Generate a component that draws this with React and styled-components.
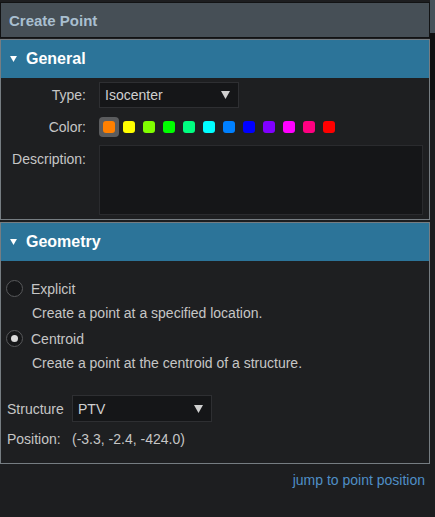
import React from 'react';
import styled, { createGlobalStyle } from 'styled-components';

const GlobalStyle = createGlobalStyle`
	html, body {
		margin: 0;
		padding: 0;
		background: #1d1e20;
	}
	body {
		font-family: 'Liberation Sans', Arial, sans-serif;
		font-size: 14px;
		color: #c6c6c6;
	}
`;

const swatches = [
	'#ff8000',
	'#ffff00',
	'#80ff00',
	'#00ff00',
	'#00ff80',
	'#00ffff',
	'#0080ff',
	'#0000ff',
	'#8000ff',
	'#ff00ff',
	'#ff0080',
	'#ff0000',
];

const Page = styled.div`
	display: flex;
	height: 517px;
	width: 435px;
	background: #1d1e20;
	overflow: hidden;
`;

const Main = styled.div`
	display: flex;
	flex-direction: column;
	width: 430px;
	padding-top: 2px;
	box-sizing: border-box;
	background: #1d1e20;
`;

const ScrollTrack = styled.div`
	width: 5px;
	background: linear-gradient(
		to bottom,
		#46525a 0,
		#46525a 33px,
		#0f1011 33px,
		#0f1011 100px,
		#1b1c1e 100px
	);
`;

const TitleBar = styled.div`
	height: 36px;
	box-sizing: border-box;
	background: #464f56;
	border: 1px solid #121314;
	color: #a9bfd0;
	font-weight: bold;
	font-size: 15px;
	display: flex;
	align-items: center;
	padding-left: 8px;
`;

const Panel = styled.div`
	border: 1px solid #767d82;
	margin-top: ${(props) => props.gap}px;
	background: #1e1f21;
`;

const PanelHeader = styled.div`
	height: 38px;
	background: #2c7499;
	color: #ffffff;
	font-weight: bold;
	font-size: 16px;
	display: flex;
	align-items: center;
	gap: 9px;
	padding-left: 9px;
`;

const FormGrid = styled.div`
	display: grid;
	grid-template-columns: 85px 1fr;
	column-gap: 13px;
	row-gap: 9px;
	padding: 4px 6px 4px 0;
	align-items: center;
`;

const Label = styled.div`
	text-align: right;
	line-height: 16px;
	align-self: ${(props) => (props.top ? 'start' : 'center')};
	padding-top: ${(props) => (props.top ? '5px' : '0')};
`;

const Select = styled.div`
	width: ${(props) => props.width}px;
	height: ${(props) => props.height}px;
	box-sizing: border-box;
	background: #151618;
	border: 1px solid #2e2f32;
	display: flex;
	align-items: center;
	justify-content: space-between;
	padding: 0 8px 0 5px;
	color: #d0d0d0;
`;

const Swatches = styled.div`
	display: flex;
`;

const Swatch = styled.div`
	width: 20px;
	height: 20px;
	border-radius: 4px;
	display: flex;
	align-items: center;
	justify-content: center;
	background: ${(props) => (props.selected ? '#5b5c5e' : 'transparent')};

	&::after {
		content: '';
		width: 12px;
		height: 12px;
		border-radius: 3px;
		background: ${(props) => props.color};
	}
`;

const TextArea = styled.div`
	height: 70px;
	box-sizing: border-box;
	background: #151618;
	border: 1px solid #2a2b2e;
	margin-top: -1px;
`;

const GeometryBody = styled.div`
	padding: 15px 0 13px 5px;
	display: flex;
	flex-direction: column;
`;

const RadioRow = styled.div`
	display: flex;
	align-items: center;
	gap: 8px;
	height: 25px;
`;

const Radio = styled.div`
	width: 17px;
	height: 17px;
	box-sizing: border-box;
	border-radius: 50%;
	border: 1px solid #58595b;
	background: #161719;
	display: flex;
	align-items: center;
	justify-content: center;

	&::after {
		content: '';
		width: 7px;
		height: 7px;
		border-radius: 50%;
		background: ${(props) => (props.checked ? '#dadada' : 'transparent')};
	}
`;

const Hint = styled.div`
	height: 25px;
	line-height: 25px;
	padding-left: 26px;
`;

const FieldGrid = styled.div`
	display: grid;
	grid-template-columns: 56px auto;
	column-gap: 9px;
	row-gap: 6px;
	align-items: center;
	justify-content: start;
	margin-top: 19px;
	margin-left: 1px;
`;

const Value = styled.div`
	line-height: 22px;
`;

const Link = styled.div`
	margin-top: 8px;
	line-height: 16px;
	text-align: right;
	padding-right: 5px;
	color: #4f8fc6;
`;

const Caret = ({ size = 7, color = '#ffffff' }) => (
	<svg width={size} height={size - 1} viewBox="0 0 8 7">
		<polygon points="0,0 8,0 4,7" fill={color} />
	</svg>
);

const App = () => (
	<Page>
		<GlobalStyle />
		<Main>
			<TitleBar>Create Point</TitleBar>

			<Panel gap={1}>
				<PanelHeader>
					<Caret />
					General
				</PanelHeader>
				<FormGrid>
					<Label>Type:</Label>
					<Select width={140} height={26}>
						Isocenter
						<Caret size={9} color="#cfcfcf" />
					</Select>
					<Label>Color:</Label>
					<Swatches>
						{swatches.map((c, i) => (
							<Swatch key={c} color={c} selected={i === 0} />
						))}
					</Swatches>
					<Label top>Description:</Label>
					<TextArea />
				</FormGrid>
			</Panel>

			<Panel gap={2}>
				<PanelHeader>
					<Caret />
					Geometry
				</PanelHeader>
				<GeometryBody>
					<RadioRow>
						<Radio />
						Explicit
					</RadioRow>
					<Hint>Create a point at a specified location.</Hint>
					<RadioRow>
						<Radio checked />
						Centroid
					</RadioRow>
					<Hint>Create a point at the centroid of a structure.</Hint>
					<FieldGrid>
						<div>Structure</div>
						<Select width={140} height={27}>
							PTV
							<Caret size={9} color="#cfcfcf" />
						</Select>
						<Value>Position:</Value>
						<Value>(-3.3, -2.4, -424.0)</Value>
					</FieldGrid>
				</GeometryBody>
			</Panel>

			<Link>jump to point position</Link>
		</Main>
		<ScrollTrack />
	</Page>
);

export default App;
